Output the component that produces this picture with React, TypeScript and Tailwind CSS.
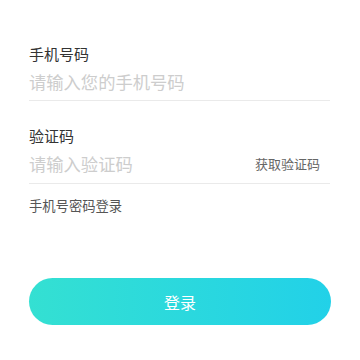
import React, { useState } from 'react'

const font = { fontFamily: '"Noto Sans CJK SC", "Noto Sans", sans-serif' }

const App: React.FC = () => {
  const [phone, setPhone] = useState('')
  const [code, setCode] = useState('')

  return (
    <div className="w-[360px] h-[360px] bg-white px-[29px] pt-[43px]" style={font}>
      <div className="w-[301px]">
        <label className="block text-[15px] leading-[22px] text-[#333]">手机号码</label>
        <div className="mt-[5px] border-b border-[#eaeaea] pb-[6px]">
          <input
            value={phone}
            onChange={(e) => setPhone(e.target.value)}
            placeholder="请输入您的手机号码"
            className="w-full h-[24px] text-[17.3px] leading-[24px] text-[#333] placeholder:text-[#cdcdcd] outline-none bg-transparent"
            style={font}
          />
        </div>

        <label className="block mt-[24px] text-[15px] leading-[22px] text-[#333]">验证码</label>
        <div className="mt-[5px] border-b border-[#eaeaea] pb-[7px] flex items-center">
          <input
            value={code}
            onChange={(e) => setCode(e.target.value)}
            placeholder="请输入验证码"
            className="flex-1 min-w-0 h-[24px] text-[17.3px] leading-[24px] text-[#333] placeholder:text-[#cdcdcd] outline-none bg-transparent"
            style={font}
          />
          <button className="text-[13px] leading-[24px] text-[#666] mr-[10px]">获取验证码</button>
        </div>

        <div className="mt-[12px] text-[13.3px] leading-[20px] text-[#555]">手机号密码登录</div>
      </div>

      <button
        className="mt-[62px] w-[302px] h-[47px] rounded-full bg-gradient-to-r from-[#34e0d2] to-[#22d1e8] text-white text-[16px]"
        style={font}
      >
        登录
      </button>
    </div>
  )
}

export default App
